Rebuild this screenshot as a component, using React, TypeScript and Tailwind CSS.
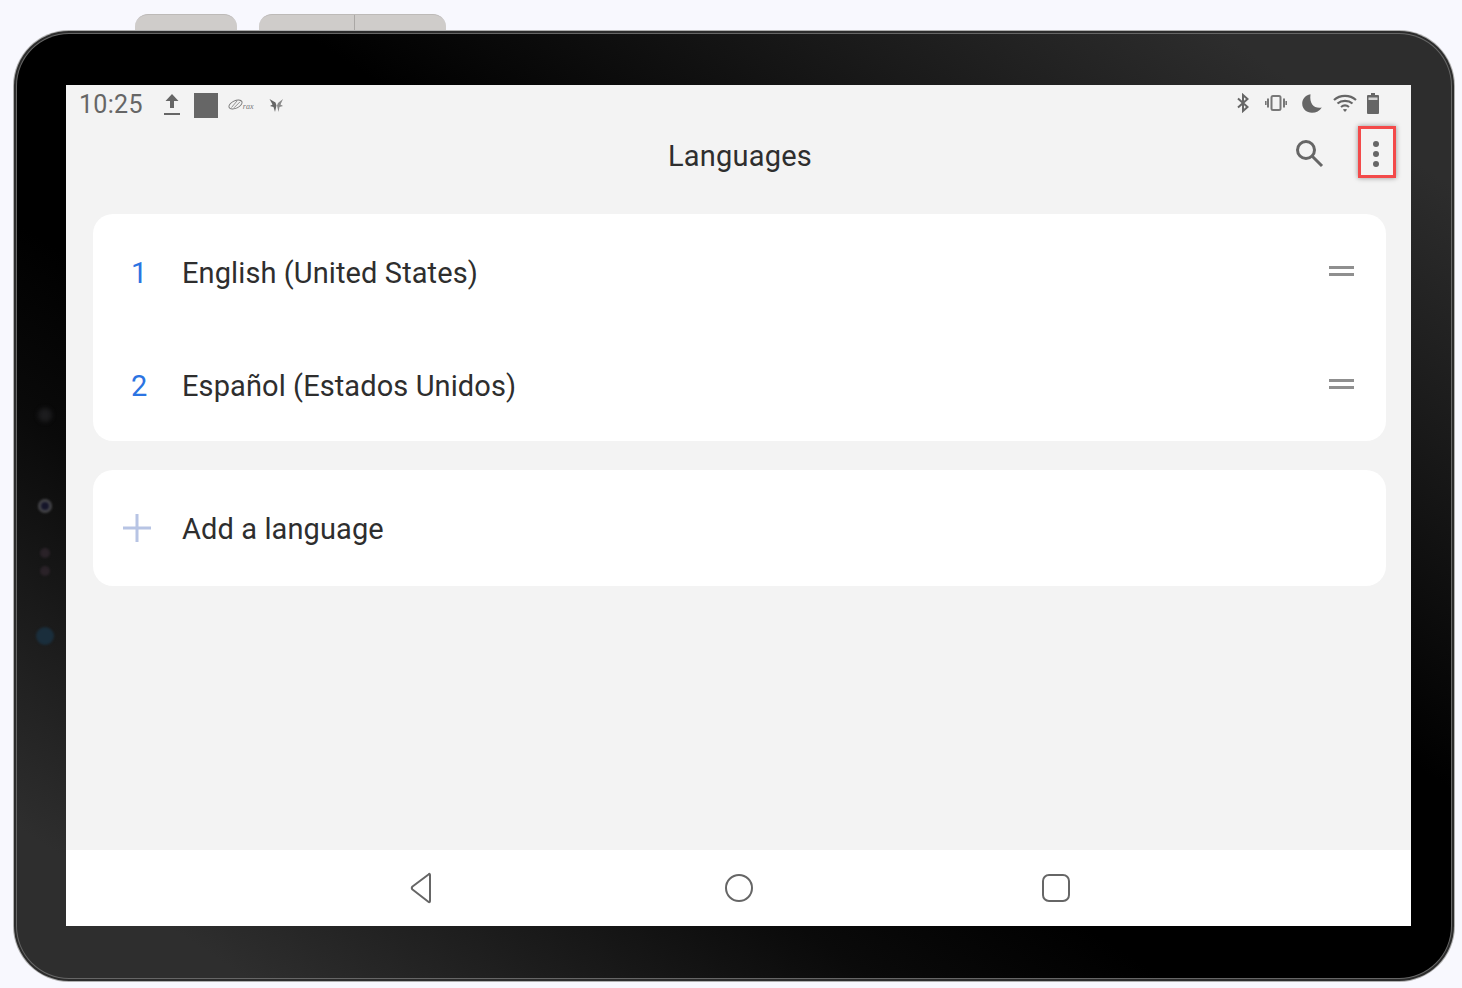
const sans = "font-['Roboto',sans-serif]";

function DragHandle() {
  return (
    <div className="flex flex-col gap-[4px] w-[26px] pr-[1px]">
      <div className="h-[3px] bg-[#8f8f8f]" />
      <div className="h-[3px] bg-[#8f8f8f]" />
    </div>
  );
}

function LangRow({ n, label }: { n: string; label: string }) {
  return (
    <div className="h-[113px] flex items-center pl-[38px] pr-[31px]">
      <span className="w-[51px] pt-[6px] text-[29px] text-[#2b74e2]">{n}</span>
      <span className="flex-1 pt-[6px] text-[29px] tracking-[0.1px] text-[#2e2e2e]">{label}</span>
      <DragHandle />
    </div>
  );
}

function LeftStatusIcons() {
  return (
    <div className="flex items-center">
      <svg width="18" height="24" viewBox="0 0 18 24" className="ml-[20px]" fill="#666">
        <path d="M9 1 L15.5 8 H11 V15 H7 V8 H2.5 Z" />
        <rect x="1" y="20" width="16" height="2" />
      </svg>
      <div className="w-[24px] h-[25px] bg-[#666] ml-[13px]" />
      <div className="flex items-center ml-[10px] w-[26px]">
        <svg width="15" height="14" viewBox="0 0 15 14" fill="none" stroke="#777">
          <ellipse cx="7.5" cy="6.5" rx="7" ry="3.8" transform="rotate(-25 7.5 6.5)" strokeWidth="0.9" />
          <path d="M3.5 9.5 L9 3 M6 9.8 L12 3.8" strokeWidth="0.8" />
        </svg>
        <span className="text-[8px] leading-none italic text-[#777] pt-[4px] font-['Liberation_Serif',serif]">rax</span>
      </div>
      <svg width="15" height="15" viewBox="0 0 15 15" className="ml-[15px]" fill="#666">
        <path d="M0.5 1 L6.5 4.5 L7.5 7.5 L6 14 L4.5 9 L1 8 L3.5 6.5 Z" />
        <path d="M14 1 L9 5 L8 7.5 L9.5 14 L10.5 9 L14 8 L11.5 6.5 Z" fill="#8a8a8a" />
      </svg>
    </div>
  );
}

function RightStatusIcons() {
  return (
    <div className="flex items-center pr-[32px] -mt-[4px]">
      <svg width="14" height="20" viewBox="0 0 14 20" fill="none" stroke="#666" strokeWidth="2">
        <path d="M2 5.5 L11.5 14 L7 18 V2 L11.5 6 L2 14.5" />
      </svg>
      <svg width="22" height="18" viewBox="0 0 22 18" className="ml-[15px]" fill="none" stroke="#777">
        <rect x="6.5" y="2" width="9" height="14" rx="1.5" strokeWidth="2" />
        <path d="M3 4.5 V13.5 M19 4.5 V13.5" strokeWidth="2" />
        <path d="M0.8 7 V11 M21.2 7 V11" strokeWidth="1.6" />
      </svg>
      <svg width="20" height="19" viewBox="0 0 20 19" className="ml-[15px]" fill="#666">
        <path d="M8.5 0.2 C3 1.5 0.2 5 0.2 9.5 C0.2 15 4.5 18.8 10 18.8 C14 18.8 17.8 16.8 19.8 13.5 C13 15 7 10.5 8.5 0.2 Z" />
      </svg>
      <svg width="24" height="18" viewBox="0 0 24 18" className="ml-[11px]" fill="none" stroke="#666" strokeWidth="2.2">
        <path d="M1 6 C7 0.5 17 0.5 23 6" />
        <path d="M4.5 9.5 C8.5 6 15.5 6 19.5 9.5" />
        <path d="M8 13 C10.5 11 13.5 11 16 13" />
        <path d="M12 18 L9.8 15.6 C11 14.8 13 14.8 14.2 15.6 Z" fill="#666" stroke="none" />
      </svg>
      <svg width="12" height="21" viewBox="0 0 12 21" className="ml-[10px]" fill="#666">
        <path d="M4 0 H8 V2 H11 Q12 2 12 3 V20 Q12 21 11 21 H1 Q0 21 0 20 V3 Q0 2 1 2 H4 Z" />
        <rect x="1.5" y="4.5" width="9" height="2.5" fill="#d4d4d4" />
      </svg>
    </div>
  );
}

export default function App() {
  return (
    <div className={`w-[1462px] h-[988px] bg-[#f8f8fe] overflow-hidden pt-[14px] ${sans}`}>
      {/* side keys */}
      <div className="flex h-[16px] pl-[135px] gap-[22px]">
        <div className="w-[102px] rounded-t-[13px] bg-[#cfccca] border-t border-[#bdbab8]" />
        <div className="w-[187px] rounded-t-[13px] bg-[#cfccca] border-t border-[#bdbab8] flex">
          <div className="w-[96px] border-r border-[#aaa7a5]" />
        </div>
      </div>

      {/* device */}
      <div className="ml-[13px] w-[1442px] h-[952px] rounded-[56px] bg-[#b0b0b0] p-[1px]">
        <div className="w-full h-full rounded-[55px] bg-[#2c2c2c] p-[2px]">
          <div className="w-full h-full rounded-[53px] bg-[#666] p-[1px]">
            <div className="relative w-full h-full rounded-[52px] bg-[linear-gradient(to_top_right,#2e2e2e_0%,#2e2e2e_8%,#0a0a0a_30%,#000_40%,#000_60%,#2d2d2d_92%,#2d2d2d_100%)] overflow-hidden pt-[51px] pl-[49px] pr-[40px] pb-[52px]">
              {/* front sensors */}
              <div className="absolute left-[21px] top-[374px] w-[14px] h-[14px] rounded-full bg-[#1c1c1e] blur-[2px]" />
              <div className="absolute left-[21px] top-[465px] w-[14px] h-[14px] rounded-full border-[3px] border-[#444448] bg-[#15152a] blur-[1px]" />
              <div className="absolute left-[23px] top-[514px] w-[10px] h-[10px] rounded-full bg-[#2a2228] blur-[1px]" />
              <div className="absolute left-[23px] top-[532px] w-[10px] h-[10px] rounded-full bg-[#2a2228] blur-[1px]" />
              <div className="absolute left-[19px] top-[593px] w-[18px] h-[18px] rounded-full bg-[#1a2e3c] blur-[1px]" />

              {/* screen */}
              <div className="relative w-[1345px] h-[841px] bg-[#f3f3f3] flex flex-col">
                <div className="h-[40px] shrink-0 flex items-center justify-between pl-[13px]">
                  <div className="flex items-center">
                    <span className="text-[25px] text-[#666] tracking-[0.3px]">10:25</span>
                    <LeftStatusIcons />
                  </div>
                  <RightStatusIcons />
                </div>

                <div className="h-[53px] shrink-0 grid grid-cols-[1fr_auto_1fr] items-center pl-[3px]">
                  <div />
                  <h1 className="pt-[10px] text-[29px] font-normal text-[#2e2e2e] tracking-[0.2px]">Languages</h1>
                  <div className="flex items-center justify-end pr-[15px]">
                    <svg width="30" height="30" viewBox="0 0 30 30" fill="none" stroke="#666" strokeWidth="3" className="mr-[34px] mt-[2px]">
                      <circle cx="12" cy="12" r="8.5" />
                      <path d="M18.5 18.5 L28 28" />
                    </svg>
                    <div className="w-[38px] h-[52px] border-[3px] border-[#f34a4a] shadow-[0_0_5px_rgba(0,0,0,0.4)] flex flex-col items-center justify-center gap-[4px] pt-[4px] pr-[2px]">
                      <div className="w-[6px] h-[6px] rounded-full bg-[#666]" />
                      <div className="w-[6px] h-[6px] rounded-full bg-[#666]" />
                      <div className="w-[6px] h-[6px] rounded-full bg-[#666]" />
                    </div>
                  </div>
                </div>

                <div className="flex-1 pt-[36px] pl-[27px] pr-[25px] flex flex-col gap-[29px]">
                  <div className="bg-white rounded-[20px] h-[227px]">
                    <LangRow n="1" label="English (United States)" />
                    <LangRow n="2" label="Español (Estados Unidos)" />
                  </div>
                  <div className="bg-white rounded-[20px] h-[116px] flex items-center pl-[29px]">
                    <svg width="30" height="30" viewBox="0 0 30 30" stroke="#b7c4e4" strokeWidth="3">
                      <path d="M15 1 V29 M1 15 H29" />
                    </svg>
                    <span className="ml-[30px] pt-[4px] text-[29px] tracking-[0.1px] text-[#2e2e2e]">Add a language</span>
                  </div>
                </div>

                <div className="h-[76px] shrink-0 bg-white flex items-center pl-[344px]">
                  <svg width="22" height="32" viewBox="0 0 22 32" fill="none" stroke="#666" strokeWidth="2" strokeLinejoin="round">
                    <path d="M20 3 Q20 1 18.5 2.5 L2.5 14.5 Q1 16 2.5 17.5 L18 29.5 Q20 31 20 29 Z" />
                  </svg>
                  <svg width="30" height="30" viewBox="0 0 30 30" fill="none" stroke="#666" strokeWidth="2" className="ml-[292px]">
                    <circle cx="15" cy="15" r="13" />
                  </svg>
                  <svg width="28" height="28" viewBox="0 0 28 28" fill="none" stroke="#666" strokeWidth="2" className="ml-[288px]">
                    <rect x="1" y="1" width="26" height="26" rx="6" />
                  </svg>
                </div>
              </div>
            </div>
          </div>
        </div>
      </div>
    </div>
  );
}
